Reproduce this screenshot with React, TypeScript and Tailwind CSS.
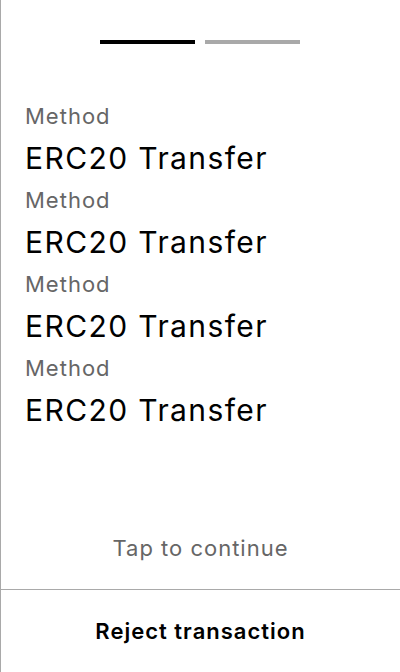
export default function App() {
  const items = [0, 1, 2, 3];
  return (
    <div
      className="w-[400px] h-[672px] bg-white border-l border-[#a9a9a9] flex flex-col"
      style={{ fontFamily: "Inter, 'Noto Sans', sans-serif" }}
    >
      <div className="flex justify-center gap-[10px] pt-[40px] pr-[1px]">
        <div className="w-[95px] h-[4px] bg-black" />
        <div className="w-[95px] h-[4px] bg-[#a9a9a9]" />
      </div>
      <div className="flex flex-col px-[24px] pt-[58px]">
        {items.map((i) => (
          <div key={i} className="flex flex-col">
            <div className="text-[22px] leading-[28px] tracking-[1px] text-[#666666]">Method</div>
            <div className="text-[30px] leading-[56px] tracking-[1.4px] text-black">ERC20 Transfer</div>
          </div>
        ))}
      </div>
      <div className="flex-1" />
      <div className="text-center text-[22px] leading-[28px] tracking-[1px] text-[#666666] pb-[27px]">Tap to continue</div>
      <div className="border-t border-[#a9a9a9] h-[83px] flex items-center justify-center">
        <span className="text-[22px] font-semibold tracking-[1px] text-black">Reject transaction</span>
      </div>
    </div>
  );
}
